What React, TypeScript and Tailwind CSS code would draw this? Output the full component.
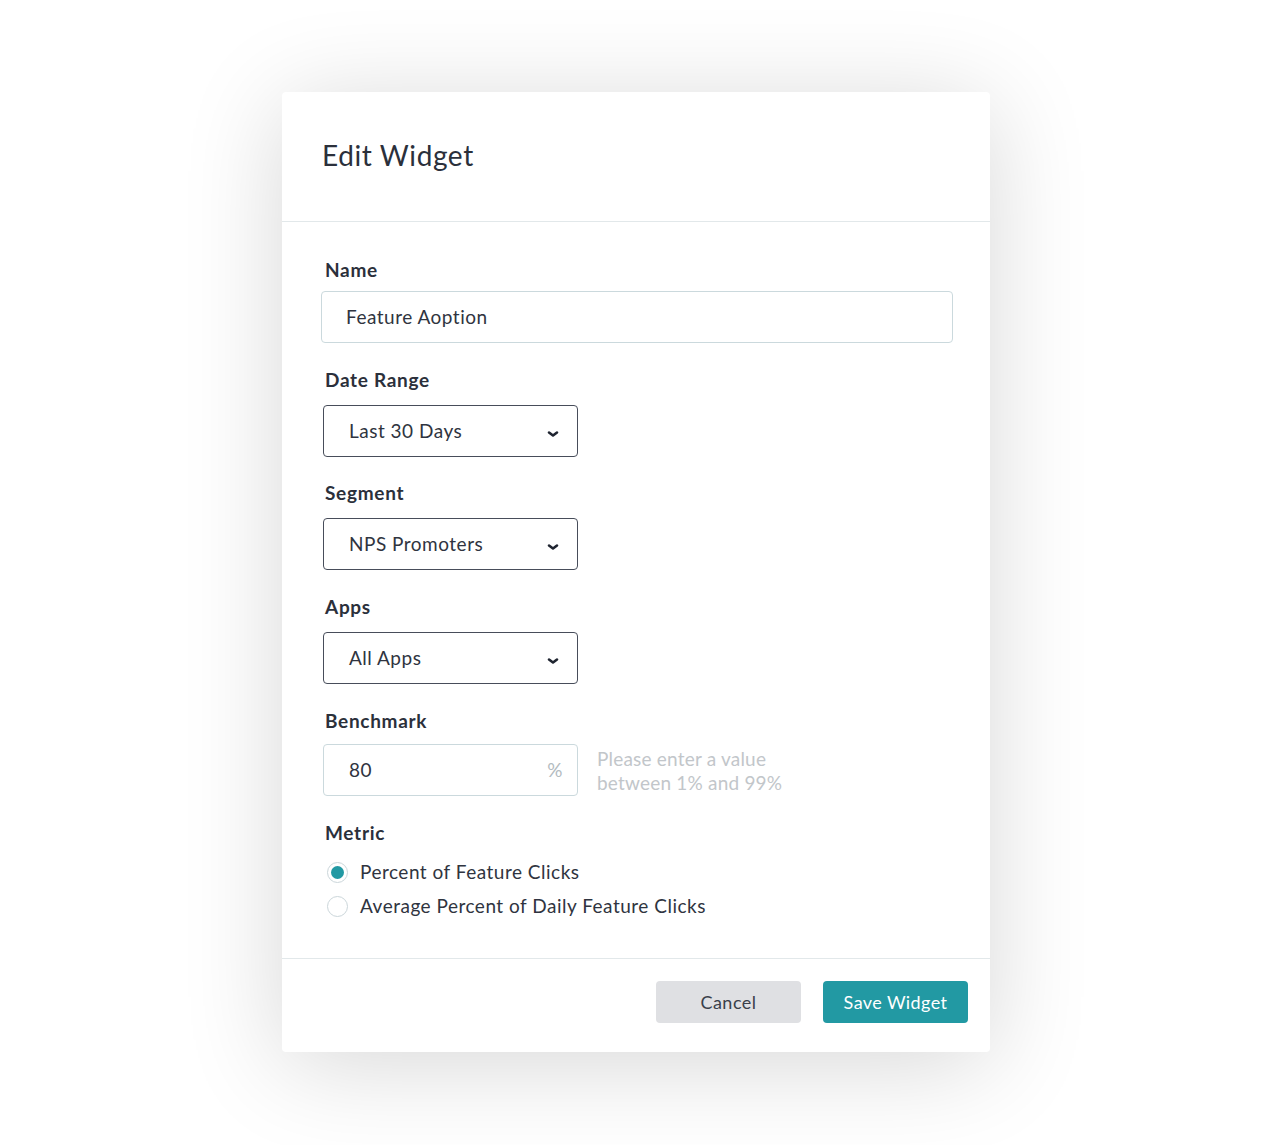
import { useState } from "react";

const font = { fontFamily: "Lato, 'Open Sans', sans-serif" };

function Chevron() {
  return (
    <svg width="12" height="8" viewBox="0 0 12 8" className="mt-[6px] text-[#1f2430]">
      <path d="M2 2.5l4 3L10 2.5" fill="none" stroke="currentColor" strokeWidth="2.6" strokeLinecap="round" strokeLinejoin="round" />
    </svg>
  );
}

function Select({ value }: { value: string }) {
  return (
    <div className="ml-[2px] flex h-[52px] w-[255px] items-center justify-between rounded-[4px] border-[1.5px] border-[#474d5a] pl-[25px] pr-[18px] text-[19px] tracking-[0.5px] text-[#2f3440]">
      <span>{value}</span>
      <Chevron />
    </div>
  );
}

function Label({ children, className }: { children: string; className: string }) {
  return (
    <div className={"ml-1 h-6 text-[19px] leading-6 font-bold tracking-[0.7px] text-[#2b303b] " + className}>
      {children}
    </div>
  );
}

function Radio({ checked, label, onClick }: { checked: boolean; label: string; onClick: () => void }) {
  return (
    <button onClick={onClick} className="ml-[6px] flex h-6 items-center gap-[12px] text-left text-[19px] tracking-[0.5px] text-[#2f3440]">
      <span className="flex h-[21px] w-[21px] items-center justify-center rounded-full border-[1.5px] border-[#cbd6da] bg-white">
        {checked && <span className="h-[13px] w-[13px] rounded-full bg-[#2299a3]" />}
      </span>
      <span>{label}</span>
    </button>
  );
}

export default function App() {
  const [metric, setMetric] = useState(0);

  return (
    <div className="min-h-[1145px] bg-white pt-[92px] pl-[282px]" style={font}>
      <div className="h-[960px] w-[708px] rounded-[4px] bg-white shadow-[0_12px_100px_rgba(0,0,0,0.16)]">
        <div className="flex h-[130px] items-center border-b border-[#e2e8ea] px-10 pb-[3px]">
          <h1 className="text-[28px] tracking-[0.6px] text-[#2b303b]">Edit Widget</h1>
        </div>

        <div className="pl-[39px] pr-[37px] pb-[40px]">
          <Label className="mt-[36px]">Name</Label>
          <div className="mt-[9px] flex h-[52px] items-center rounded-[4px] border-[1.5px] border-[#cbd9dd] px-6 text-[19px] tracking-[0.5px] text-[#2f3440]">
            Feature Aoption
          </div>

          <Label className="mt-[25px]">Date Range</Label>
          <div className="mt-[13px]">
            <Select value="Last 30 Days" />
          </div>

          <Label className="mt-[24px]">Segment</Label>
          <div className="mt-[13px]">
            <Select value="NPS Promoters" />
          </div>

          <Label className="mt-[25px]">Apps</Label>
          <div className="mt-[13px]">
            <Select value="All Apps" />
          </div>

          <Label className="mt-[25px]">Benchmark</Label>
          <div className="mt-[11px] flex items-center gap-[19px]">
            <div className="ml-[2px] flex h-[52px] w-[255px] items-center justify-between rounded-[4px] border-[1.5px] border-[#cbd9dd] pl-[25px] pr-[14px] text-[19px] tracking-[0.5px] text-[#2f3440]">
              <span>80</span>
              <span className="text-[#b3bbc0]">%</span>
            </div>
            <div className="mt-[2px] text-[19px] leading-6 tracking-[0.2px] text-[#c2c6ca]">
              Please enter a value
              <br />
              between 1% and 99%
            </div>
          </div>

          <Label className="mt-[25px]">Metric</Label>
          <div className="mt-[15px] flex flex-col gap-[10px]">
            <Radio checked={metric === 0} label="Percent of Feature Clicks" onClick={() => setMetric(0)} />
            <Radio checked={metric === 1} label="Average Percent of Daily Feature Clicks" onClick={() => setMetric(1)} />
          </div>
        </div>

        <div className="flex justify-end gap-[22px] border-t border-[#e2e8ea] pt-[22px] pr-[22px]">
          <button className="h-[42px] w-[145px] rounded-[4px] bg-[#dfe0e3] text-[18px] tracking-[0.5px] text-[#3a3f4a]">Cancel</button>
          <button className="h-[42px] w-[145px] rounded-[4px] bg-[#2299a3] text-[18px] tracking-[0.4px] text-white">Save Widget</button>
        </div>
      </div>
    </div>
  );
}
